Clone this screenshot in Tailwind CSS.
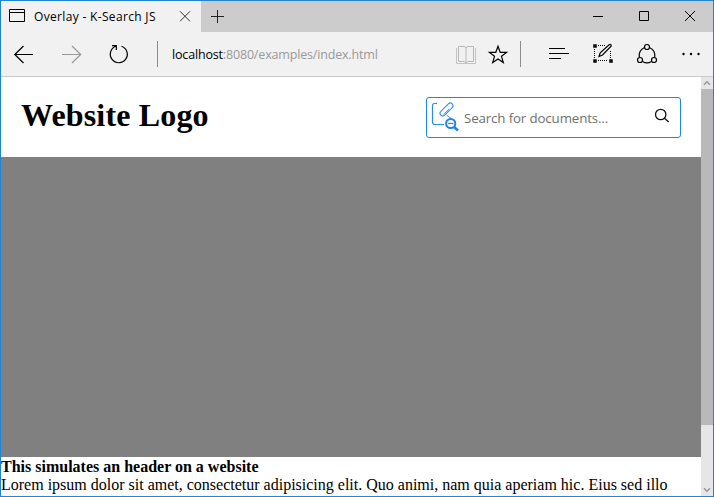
<!DOCTYPE html>
<html lang="en">
<head>
<meta charset="utf-8">
<title>Overlay - K-Search JS</title>
<script src="https://cdn.jsdelivr.net/npm/@tailwindcss/browser@4"></script>
</head>
<body class="h-[497px] w-[714px] overflow-hidden">
<div class="flex h-[497px] w-[714px] flex-col overflow-hidden border border-[#1f83d6] bg-white">
  <!-- Title bar -->
  <div class="flex h-[31px] shrink-0 bg-[#cccccc] text-black">
    <div class="flex w-[200px] items-center bg-[#f1f1f1]">
      <svg class="h-[31px] w-[33px] shrink-0" viewBox="1 1 33 31" fill="none" stroke="#000"><path d="M9.5 9.5h15v12h-15zM9.5 12.5h15"/></svg>
      <span class="w-[140px] whitespace-nowrap font-['Open_Sans',sans-serif] text-[12px] leading-[31px] tracking-[0.33px]">Overlay - K-Search JS</span>
      <svg class="h-[31px] w-[27px] shrink-0" viewBox="174 1 27 31" fill="none" stroke="#333"><path d="M180 11.3l10 10M190 11.3l-10 10"/></svg>
    </div>
    <svg class="h-[31px] w-[34px]" viewBox="201 1 34 31" fill="none" stroke="#222"><path d="M211 16.5h13M217.5 10v13"/></svg>
    <div class="ml-auto flex">
      <svg class="h-[31px] w-[46px]" viewBox="575 1 46 31" fill="none" stroke="#000"><path d="M593 16.5h10"/></svg>
      <svg class="h-[31px] w-[46px]" viewBox="621 1 46 31" fill="none" stroke="#000"><path d="M639.5 11.5h9v9h-9z"/></svg>
      <svg class="h-[31px] w-[46px]" viewBox="667 1 46 31" fill="none" stroke="#000"><path d="M685 11l10 10M695 11l-10 10"/></svg>
    </div>
  </div>
  <!-- Address bar -->
  <div class="flex h-[45px] shrink-0 border-b border-[#cccccc] bg-[#f1f1f1]">
    <svg class="h-[44px] w-[47px]" viewBox="1 32 47 44" fill="none" stroke="#000" stroke-width="1.2"><path d="M33 54.5H14.5M23.5 46l-8.7 8.5 8.7 8.5"/></svg>
    <svg class="h-[44px] w-[48px]" viewBox="48 32 48 44" fill="none" stroke="#999" stroke-width="1.2"><path d="M62 54.5h18.5M72 46l8.7 8.5L72 63"/></svg>
    <svg class="h-[44px] w-[61px]" viewBox="96 32 61 44" fill="none" stroke="#000" stroke-width="1.2"><path d="M121.500 46.200A8.500 8.500 0 1 1 115.800 46.300M112 45.600h4.300v4.400"/></svg>
    <div class="mt-[9px] h-[26px] w-px bg-[#8c8c8c]"></div>
    <div class="ml-[14px] w-[275px] whitespace-nowrap font-['Open_Sans',sans-serif] text-[12.5px] leading-[45px] tracking-[-0.17px] text-[#999]"><span class="text-black">localhost</span>:8080/examples/index.html</div>
    <svg class="h-[44px] w-[34px]" viewBox="447 32 34 44" fill="none" stroke="#b8b8b8"><path d="M458.5 46.5H464l2 1 2-1h5.500V61.500H468l-2 1-2-1h-5.500zM466 47.500v15"/><path d="M456.500 48v15.500h19V48" stroke="#c4c4c4"/></svg>
    <svg class="h-[44px] w-[39px]" viewBox="481 32 39 44" fill="none" stroke="#000" stroke-width="1.200"><path d="M498 46.200l2.200 6.100 6.400.1-5.100 3.900 1.800 6.300-5.300-3.700-5.300 3.700 1.800-6.300-5.100-3.900 6.400-.1z"/></svg>
    <div class="mt-[9px] h-[26px] w-px bg-[#8c8c8c]"></div>
    <svg class="ml-[15px] h-[44px] w-[46px]" viewBox="536 32 46 44" fill="none" stroke="#000"><path d="M549 48.500h16M549 53.500h20M549 58.500h12"/></svg>
    <svg class="h-[44px] w-[45px]" viewBox="582 32 45 44" fill="none" stroke="#000"><path d="M598 45.500h8M594.500 49v9M598 60.500h10M610.500 51v7" stroke-dasharray="1 1"/><path d="M594 45h2v2h-2zM594 60h2v2h-2zM610 60h2v2h-2z" stroke-width="1.500"/><path d="M599 56.500l1.200-3.700 9.200-8.300q2-.5 1.700 1.700L602.500 55z" stroke-width="1.200"/></svg>
    <svg class="h-[44px] w-[45px]" viewBox="627 32 45 44" fill="none" stroke="#000" stroke-width="1.200"><path d="M644.500 47.500a8.500 8.500 0 0 0-5.200 9.500M649.500 47.500a8.500 8.500 0 0 1 5.200 9.500M642.500 61.500a8.500 8.500 0 0 0 9 0"/><circle cx="647" cy="47" r="2.500"/><circle cx="640" cy="60" r="2.500"/><circle cx="654" cy="60" r="2.500"/></svg>
    <svg class="h-[44px] w-[41px]" viewBox="672 32 41 44" fill="#000"><circle cx="683.500" cy="54" r="1.200"/><circle cx="691" cy="54" r="1.200"/><circle cx="698.500" cy="54" r="1.200"/></svg>
  </div>
  <!-- Page viewport -->
  <div class="flex min-h-0 flex-1">
    <div class="w-[700px] overflow-hidden font-['Liberation_Serif',serif] text-black">
      <div class="flex h-[80px] items-center justify-between pr-[20px] pl-[20px]">
        <h1 class="pb-[4px] text-[32px] leading-[36px] font-bold tracking-[0.16px] whitespace-nowrap">Website Logo</h1>
        <div class="flex h-[41px] w-[255px] rounded-[3px] border border-[#1f88e5]">
          <svg class="h-[39px] w-[37px] shrink-0" viewBox="427 98 37 39" fill="none" stroke="#2b8ce6">
            <path d="M437 103.500h-2.500q-2 0-2 2V122q0 2.500 2.500 2.500h9" stroke-width="1.200"/>
            <rect x="-8" y="-2.700" width="16" height="5.400" rx="2.700" transform="translate(446.500 109.500) rotate(-45)" stroke-width="1"/>
            <path d="M443.500 114.500l5.500-5.300M446.500 115l4.500 3.500" stroke-width=".9"/>
            <circle cx="450.700" cy="123.500" r="4.600" stroke-width="2" stroke="#1f84e4"/><path d="M448 123.500h5.500" stroke-width="1.300"/><path d="M454 127l4 3.500" stroke-width="2.600" stroke="#1f84e4"/>
          </svg>
          <span class="w-[179px] whitespace-nowrap font-['Open_Sans',sans-serif] text-[13.300px] leading-[40px] tracking-[-0.130px] text-[#707070]">Search for documents...</span>
          <svg class="h-[39px] w-[37px] shrink-0" viewBox="643 98 37 39" fill="none" stroke="#111" stroke-width="1.300"><circle cx="660.700" cy="114.500" r="5.200"/><path d="M664.500 118.200l4.200 3.800"/></svg>
        </div>
      </div>
      <div class="h-[300px] bg-[#808080]"></div>
      <div class="whitespace-nowrap text-[16px] leading-[18px]">
        <p class="pt-px font-bold">This simulates an header on a website</p>
        <p>Lorem ipsum dolor sit amet, consectetur adipisicing elit. Quo animi, nam quia aperiam hic. Eius sed illo</p>
      </div>
    </div>
    <!-- Scrollbar -->
    <div class="flex w-[12px] flex-col bg-[#e6e6e6]">
      <svg class="h-[12px] w-[12px]" viewBox="0 0 12 12" fill="none" stroke="#999" stroke-width="1.500"><path d="M3 7.700l3-3 3 3"/></svg>
      <div class="h-[336px] bg-[#b9b9b9]"></div>
      <svg class="mt-auto h-[12px] w-[12px]" viewBox="0 0 12 12" fill="none" stroke="#999" stroke-width="1.500"><path d="M3 4.300l3 3 3-3"/></svg>
    </div>
  </div>
</div>
</body>
</html>
